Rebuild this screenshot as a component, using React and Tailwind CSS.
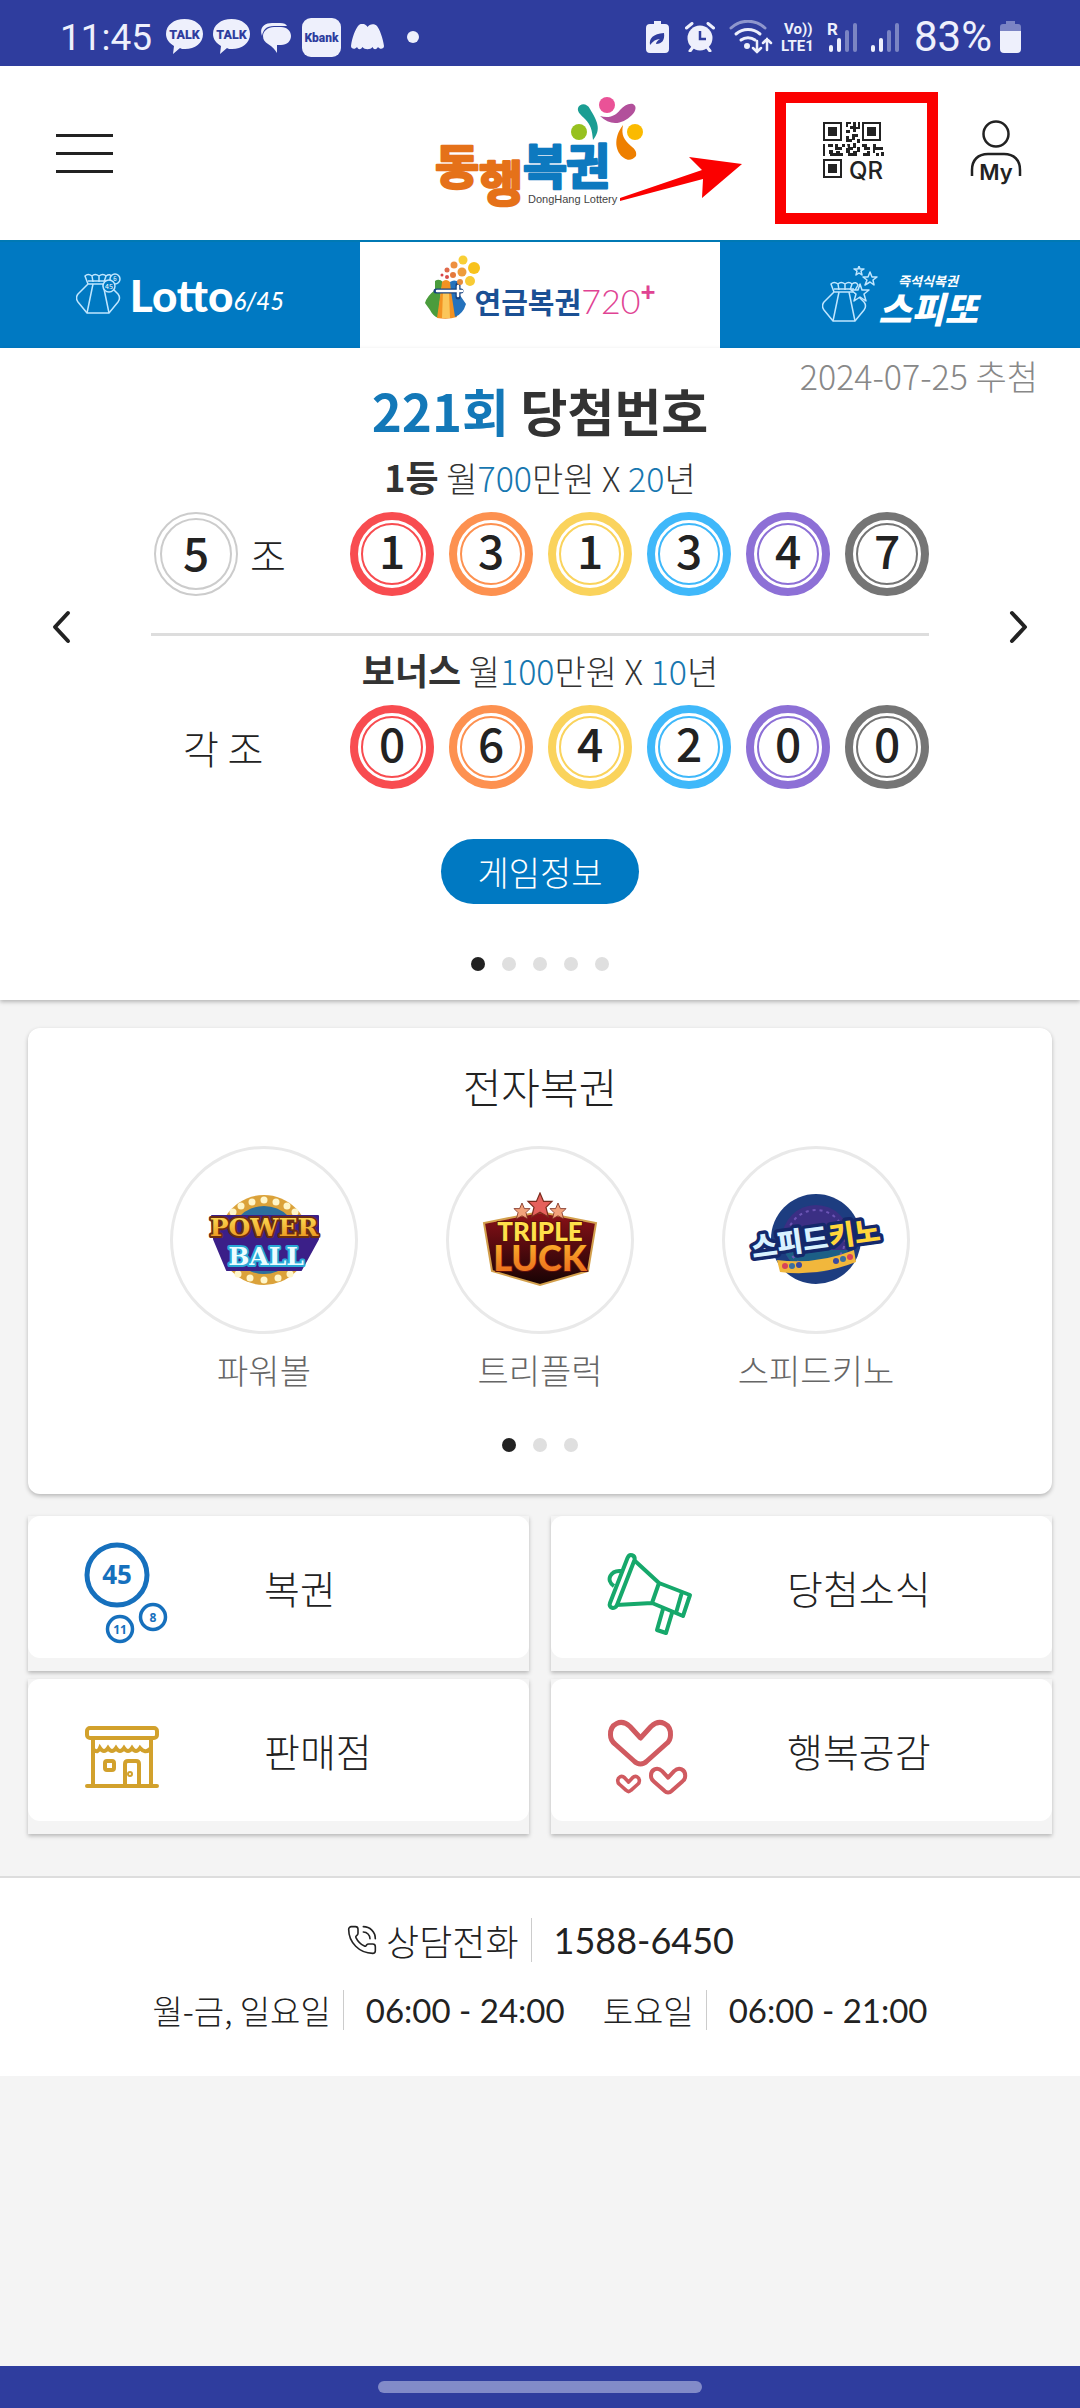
import { useState } from "react";
import { PhoneCall } from "lucide-react";

const firstPrize = ["1", "3", "1", "3", "4", "7"];
const bonusPrize = ["0", "6", "4", "2", "0", "0"];

const ballColors = [
  "border-[#f84c50] text-[#f84c50]",
  "border-[#fd9150] text-[#fd9150]",
  "border-[#fad35c] text-[#fad35c]",
  "border-[#3fb8fa] text-[#3fb8fa]",
  "border-[#8d70d6] text-[#8d70d6]",
  "border-[#757575] text-[#757575]",
];

function StatusBar() {
  return (
    <div className="flex h-[66px] items-center justify-between bg-[#2f3d9e] pt-2 pr-[59px] pl-[60px] font-['Roboto','Noto_Sans_CJK_KR',sans-serif] text-[#eef0fc]">
      <div className="flex items-center gap-[10px]">
        <span className="mr-1 text-[37px] leading-none">11:45</span>
        <TalkIcon />
        <TalkIcon />
        <svg width="32" height="32" viewBox="0 0 32 32" fill="currentColor">
          <path d="M2 15C-1 7 4 2 12 2h8c4 0 6 1 7 3H14C6 5 3 9 2 15z" />
          <path d="M14 6h7c6 0 10 4 10 9s-4 9-10 9h-4v8c-2-3-4-6-9-9-3-2-5-4-5-8 0-5 5-9 11-9z" />
        </svg>
        <svg width="39" height="39" viewBox="0 0 39 39">
          <rect width="39" height="39" rx="9" fill="currentColor" />
          <text x="19.5" y="24" textAnchor="middle" fontSize="12" fontWeight="900" fill="#2f3d9e">
            Kbank
          </text>
        </svg>
        <svg width="33" height="26" viewBox="0 0 33 26" fill="currentColor">
          <path d="M0 22C1 14 4 6 7 2s8-2 9.500 1c1.500-3 7-4 9.500-1s6 12 7 20c0 3-4 4-6 1-2 3-4 3-5.500 0-2 3-8 3-10 0-2 3-4 3-5.500 0-2 3-6 2-6-1z" />
        </svg>
        <svg className="ml-3" width="14" height="14" viewBox="0 0 14 14">
          <circle cx="7" cy="7" r="6" fill="currentColor" />
        </svg>
      </div>
      <div className="flex items-center gap-2">
        <svg width="31" height="32" viewBox="0 0 31 32">
          <path d="M8 0h7v3h4q4 0 4 4v21q0 4-4 4H4q-4 0-4-4V7q0-4 4-4h4z" fill="currentColor" />
          <path d="M4 24c-1-7 3-11 14-12 1 7-2 11-8 11 0-2 2-4 4-5-4 0-7 2-10 6z" fill="#2f3d9e" />
        </svg>
        <svg width="36" height="30" viewBox="0 0 36 30">
          <circle cx="15" cy="16" r="12.5" fill="currentColor" />
          <path d="M1.500 6L7 1.500M28.500 6L23 1.500M5 29l3-4M25 29l-3-4" stroke="currentColor" strokeWidth="3" strokeLinecap="round" />
          <path d="M15 9v8h6" stroke="#2f3d9e" strokeWidth="2.500" fill="none" />
        </svg>
        <svg width="44" height="34" viewBox="0 0 44 34" fill="none" stroke="currentColor" strokeWidth="3" strokeLinecap="round">
          <path d="M2 8C12-1 26-1 36 8" opacity="0.5" />
          <path d="M7 14c7-6 17-6 24 0M12 20c4-3 10-3 14 0" />
          <circle cx="18" cy="26" r="1.500" fill="currentColor" />
          <path d="M28 21v11m-4-4l4 4 4-4M38 30V19m-4 4l4-4 4 4" strokeWidth="2.500" />
        </svg>
        <svg width="38" height="36" viewBox="0 0 38 36" fill="currentColor" fontWeight="700">
          <text x="3" y="15" fontSize="15">Vo))</text>
          <text x="0" y="32" fontSize="15">LTE1</text>
        </svg>
        <svg width="36" height="34" viewBox="0 0 36 34" fill="currentColor">
          <text x="0" y="15" fontSize="17" fontWeight="700">R</text>
          <rect x="2" y="25" width="4" height="7" rx="2" />
          <rect x="10" y="18" width="4" height="14" rx="2" />
          <g opacity="0.4">
            <rect x="18" y="10" width="4" height="22" rx="2" />
            <rect x="26" y="3" width="4" height="29" rx="2" />
          </g>
        </svg>
        <svg width="35" height="34" viewBox="0 0 35 34" fill="currentColor">
          <rect x="0" y="25" width="4" height="7" rx="2" />
          <rect x="8" y="18" width="4" height="14" rx="2" />
          <g opacity="0.4">
            <rect x="16" y="10" width="4" height="22" rx="2" />
            <rect x="24" y="3" width="4" height="29" rx="2" />
          </g>
        </svg>
        <span className="text-[42px] leading-none">83%</span>
        <svg width="21" height="32" viewBox="0 0 21 32">
          <path d="M6 0h9v3h3q3 0 3 3v5H0V6q0-3 3-3h3z" fill="currentColor" opacity="0.4" />
          <path d="M0 10h21v18q0 4-4 4H4q-4 0-4-4z" fill="currentColor" />
        </svg>
      </div>
    </div>
  );
}

function TalkIcon() {
  return (
    <svg width="37" height="36" viewBox="0 0 37 36">
      <path d="M18.500 0C29 0 37 6 37 15s-8 15-18 15c-2 0-4 0-5-1l-7 6 1-8C3 24 0 20 0 15 0 6 8 0 18.500 0z" fill="currentColor" />
      <text x="18.500" y="20" textAnchor="middle" fontSize="12.500" fontWeight="900" fill="#2f3d9e">
        TALK
      </text>
    </svg>
  );
}

function Logo() {
  return (
    <svg width="216" height="124" viewBox="0 0 216 124" role="img" aria-label="동행복권">
      <g fontFamily="'Noto Sans CJK KR', sans-serif" fontWeight="700" fontSize="48" strokeWidth="2.500" strokeLinejoin="round">
        <text x="3" y="93" fill="#e57119" stroke="#e57119">동</text>
        <text x="47" y="110" fill="#e57119" stroke="#e57119">행</text>
        <text x="91" y="93" fill="#0d79bf" stroke="#0d79bf">복</text>
        <text x="134" y="93" fill="#0d79bf" stroke="#0d79bf">권</text>
      </g>
      <text x="96" y="112" fontFamily="'Liberation Sans', sans-serif" fontSize="11" fill="#444">
        DongHang Lottery
      </text>
      <circle cx="147" cy="41" r="8" fill="#97c11f" />
      <path d="M146 17c2-5 9-5 12 1 7 12 12 20 3 31-1-10-2-15-8-21-4-4-8-7-7-11z" fill="#1b9e93" />
      <circle cx="175" cy="14" r="8" fill="#ea5297" />
      <path d="M168 25c10 3 16-1 20-6 4-4 8-7 13-6 4 2 3 7-1 11-10 10-22 11-32 1z" fill="#b2509b" />
      <circle cx="203" cy="41" r="8" fill="#fbba00" />
      <path d="M191 34c-10 13-8 27 1 33 4 3 9 2 12-2 1-4-1-7-5-10-7-6-10-11-8-21z" fill="#ee7f00" />
    </svg>
  );
}

function QrIcon() {
  return (
    <svg width="62" height="62" viewBox="0 0 62 62" fill="#222">
      {[[0, 0], [39, 0], [0, 37]].map(([x, y]) => (
        <g key={`${x}-${y}`}>
          <rect x={x + 1} y={y + 1} width="17" height="17" fill="none" stroke="#222" strokeWidth="2" />
          <rect x={x + 5} y={y + 5} width="9" height="9" />
        </g>
      ))}
      <path d="M23 0h5v2h-3v3h-2zM30 0h3v5h2V0h2v7h-4v3h-3V7h-3V4h3zM23 8h4v3h-4zM29 12h6v3h-3v3h-3zM23 14h3v3h3v3h-6zM34 17h3v4h-3z" />
      <path d="M0 22h2v12H0zM5 22h5v3H5zM12 22h3v3h4v-3h3v3h-3v3h-7zM6 28h4v3h3v-2h4v2h3v3H7v-2H6zM24 22h3v3h3v-4h3v5h-3v3h4v-4h3v5h-3v4h-9v-3h-2v-5h2zM27 28v3h3v-3zM39 22h5v3h3v3h-6v-3h-2zM50 22h3v3h7v3h-8v3h4v3h-3v-3h-3zM40 31h4v-2h3v5h-7zM58 30h3v4h-3z" />
      <text x="26" y="57" fontFamily="Inter, 'Liberation Sans', sans-serif" fontSize="24" fontWeight="500">
        QR
      </text>
    </svg>
  );
}

function Header() {
  return (
    <header className="grid h-[174px] grid-cols-[1fr_auto_1fr] items-center bg-white px-14">
      <button aria-label="메뉴" className="flex w-[57px] flex-col gap-[15px]">
        <span className="h-[3px] bg-[#222]" />
        <span className="h-[3px] bg-[#222]" />
        <span className="h-[3px] bg-[#222]" />
      </button>
      <a href="#home">
        <Logo />
      </a>
      <div className="flex items-center justify-end gap-[85px] pr-0.5">
        <button aria-label="QR" className="relative">
          <QrIcon />
          <span className="absolute -top-[30px] -right-[53px] -bottom-[40px] -left-[48px] border-[11px] border-[#fb0000]" />
          <svg className="absolute top-8 -left-[204px]" width="124" height="50" viewBox="0 0 124 50">
            <path d="M1 44L83 16 70 3l53 7-40 34 1-19L1 47z" fill="#fb0000" />
          </svg>
        </button>
        <button aria-label="My">
          <svg width="52" height="66" viewBox="0 0 52 66" fill="none" stroke="#222" strokeWidth="2.500">
            <circle cx="26" cy="14" r="12.500" />
            <path d="M2 56V50C2 40 8 34 18 34h16c10 0 16 6 16 16v6" />
            <text x="26" y="60" textAnchor="middle" fontFamily="Inter, 'Liberation Sans', sans-serif" fontSize="22" fontWeight="600" fill="#222" stroke="none">
              My
            </text>
          </svg>
        </button>
      </div>
    </header>
  );
}

function BagOutline() {
  return (
    <g fill="none" stroke="#bfe6ff" strokeWidth="1.500" strokeLinejoin="round">
      <path d="M12 11L2 21q-3 4 0 8l9 11h22l9-11q3-4 0-8L32 11z" />
      <path d="M12 11L9 3q3-3 7 0 3-3 7 0 4-3 7 0 4-3 6 1l-4 7M17 11l-6 29M27 11l6 29M12 8h20M16 3l1 6M23 3v6M30 3l-2 6" />
    </g>
  );
}

function LottoTab() {
  return (
    <>
      <svg width="46" height="44" viewBox="0 0 46 44">
        <BagOutline />
        <circle cx="39" cy="6" r="5" fill="#0079c2" stroke="#bfe6ff" strokeWidth="1.500" />
        <circle cx="33" cy="13" r="6" fill="#0079c2" stroke="#bfe6ff" strokeWidth="1.500" />
        <text x="33" y="16" textAnchor="middle" fontSize="7" fill="#fff">45</text>
        <text x="39" y="8" textAnchor="middle" fontSize="6" fill="#fff">6</text>
      </svg>
      <span className="ml-2 font-['Lato'] text-[44px] leading-none font-black">Lotto</span>
      <span className="mt-3 font-['Lato'] text-[24px] leading-none font-medium italic">6/45</span>
    </>
  );
}

function PensionTab() {
  return (
    <>
      <svg className="mb-4 -mr-2" width="58" height="64" viewBox="0 0 58 64">
        <path d="M10 26q4-3 8 1l-2 9-3 27q-5-2-8-8L0 48q2-7 10-13z" fill="#4a9c3c" />
        <path d="M17 27q4-4 8 0l4 9 3 26q-9 3-20 1l4-28z" fill="#f39222" />
        <path d="M18 36h6l1 27h-8z" fill="#fbc65a" />
        <path d="M25 27q4-3 9 0l-2 9 9 13q-3 10-11 13l-4-26z" fill="#2572bc" />
        <path d="M11 36h25M33 30v12" stroke="#17427f" strokeWidth="5" strokeLinecap="round" />
        <path d="M12 36h25M33 31v10" stroke="#fff" strokeWidth="2.500" strokeLinecap="round" />
        <circle cx="38" cy="5" r="4.500" fill="#f8cf35" />
        <circle cx="49" cy="13" r="6" fill="#f8c21c" />
        <circle cx="45" cy="26" r="5" fill="#f8cb35" />
        <circle cx="37" cy="17" r="4.500" fill="#ee9c3b" />
        <circle cx="29" cy="10" r="3.500" fill="#ee9040" />
        <circle cx="28" cy="20" r="3" fill="#e57a3c" />
        <circle cx="35" cy="27" r="3" fill="#e58a3c" />
        <circle cx="22" cy="15" r="2.500" fill="#e0694a" />
        <circle cx="22" cy="22" r="2" fill="#d84d4a" />
        <circle cx="17" cy="20" r="1.500" fill="#d8434a" />
      </svg>
      <span className="mt-3 text-[29px] leading-none font-bold text-[#1b5094]">연금복권</span>
      <span className="mt-3 font-['Lato'] text-[34px] leading-none font-light text-[#e04393]">720</span>
      <span className="mb-2 font-['Lato'] text-[26px] leading-none font-black text-[#e04393]">+</span>
    </>
  );
}

function SpeettoTab() {
  return (
    <>
      <svg width="56" height="58" viewBox="0 0 56 58">
        <g transform="translate(0 15)">
          <BagOutline />
        </g>
        <g fill="#0079c2" stroke="#bfe6ff" strokeWidth="1.500" strokeLinejoin="round">
          <path d="M38 18l2 6 7 0-5 4 2 7-6-4-6 4 2-7-5-4 7 0z" />
          <path d="M48 6l2 5 5 0-4 3 1 5-4-3-5 3 2-5-4-3 5 0z" />
          <path d="M37 0l1 3 4 0-3 2 1 4-3-2-3 2 1-4-3-2 4 0z" />
        </g>
      </svg>
      <span className="flex flex-col items-center pt-2 font-bold italic">
        <span className="text-[13px] leading-4">즉석식복권</span>
        <span className="text-[36px] leading-9 font-black">스피또</span>
      </span>
    </>
  );
}

function Ball({ number, color }) {
  return (
    <span className={`flex size-[84px] items-center justify-center rounded-full border-8 bg-white ${color}`}>
      <span className="flex size-[62px] items-center justify-center rounded-full border-2 border-current">
        <span className="pb-2.5 text-[46px] leading-none font-medium text-[#222]">{number}</span>
      </span>
    </span>
  );
}

function Balls({ numbers }) {
  return (
    <div className="flex gap-[15px]">
      {numbers.map((n, i) => (
        <Ball key={i} number={n} color={ballColors[i]} />
      ))}
    </div>
  );
}

function PrizeTitle({ rank, amount, years }) {
  return (
    <h3 className="text-center text-[34px] leading-[38px] font-light text-[#333]">
      <strong className="text-[36px] font-bold">{rank}</strong> 월<span className="text-[#1777b0]">{amount}</span>만원 X{" "}
      <span className="text-[#1777b0]">{years}</span>년
    </h3>
  );
}

function Dots({ count, label }) {
  const [active, setActive] = useState(0);
  return (
    <div className="flex justify-center gap-[17px]">
      {Array.from({ length: count }, (_, i) => (
        <button
          key={i}
          aria-label={`${label} ${i + 1}`}
          onClick={() => setActive(i)}
          className={`size-[14px] rounded-full ${i === active ? "bg-[#222]" : "bg-[#dfdfdf]"}`}
        />
      ))}
    </div>
  );
}

function Star({ x, y, scale, fill }) {
  return (
    <path
      transform={`translate(${x} ${y}) scale(${scale})`}
      d="M0-10l3 7 7 0-5 5 2 8-7-4-7 4 2-8-5-5 7 0z"
      fill={fill}
      stroke="#7a2a1c"
      strokeWidth="1"
    />
  );
}

function PowerBallLogo() {
  return (
    <svg width="128" height="96" viewBox="0 0 128 96">
      <defs>
        <linearGradient id="gold" x1="0" y1="0" x2="0" y2="1">
          <stop offset="0" stopColor="#ffe65c" />
          <stop offset="1" stopColor="#e88a14" />
        </linearGradient>
      </defs>
      <circle cx="64" cy="48" r="45" fill="#dba23a" />
      <circle cx="64" cy="48" r="34" fill="#2c6f9d" />
      <g fill="#fff6c9">
        <circle cx="33" cy="20" r="3.500" /><circle cx="41" cy="14" r="3.500" />
        <circle cx="52" cy="10" r="3.500" /><circle cx="64" cy="8" r="3.500" />
        <circle cx="76" cy="10" r="3.500" /><circle cx="87" cy="14" r="3.500" />
        <circle cx="95" cy="20" r="3.500" /><circle cx="38" cy="82" r="3.500" />
        <circle cx="50" cy="86" r="3.500" /><circle cx="64" cy="88" r="3.500" />
        <circle cx="78" cy="86" r="3.500" /><circle cx="90" cy="82" r="3.500" />
      </g>
      <path d="M12 24h106v23l-17 31H27L14 47z" fill="#3b1f88" stroke="#3b1f88" strokeWidth="2" strokeLinejoin="round" />
      <g textAnchor="middle" fontFamily="'DejaVu Serif', serif" fontWeight="700" paintOrder="stroke" strokeLinejoin="round">
        <text x="64" y="44" fontSize="25" fill="url(#gold)" stroke="#6b2c12" strokeWidth="4">POWER</text>
        <text x="66" y="73" fontSize="25" fill="#ecfdff" stroke="#29a9d6" strokeWidth="4">BALL</text>
      </g>
    </svg>
  );
}

function TripleLuckLogo() {
  return (
    <svg width="128" height="96" viewBox="0 0 128 96">
      <defs>
        <linearGradient id="shield" x1="0" y1="0" x2="0" y2="1">
          <stop offset="0" stopColor="#8d1118" />
          <stop offset="1" stopColor="#160304" />
        </linearGradient>
        <linearGradient id="luck" x1="0" y1="0" x2="0" y2="1">
          <stop offset="0" stopColor="#ffc02e" />
          <stop offset="1" stopColor="#e8601a" />
        </linearGradient>
      </defs>
      <path d="M64 20l56 11-8 48-48 14-48-14L8 31z" fill="url(#shield)" stroke="#d3a04d" strokeWidth="2" />
      <Star x={46} y={19} scale={0.8} fill="#f2a27b" />
      <Star x={82} y={19} scale={0.8} fill="#f2a27b" />
      <Star x={64} y={13} scale={1.2} fill="#e5605c" />
      <g textAnchor="middle" fontFamily="Lato, sans-serif" fontWeight="900" paintOrder="stroke" strokeLinejoin="round">
        <text x="64" y="49" fontSize="26" fill="#ffe04a" stroke="#5a0f0c" strokeWidth="2">TRIPLE</text>
        <text x="64" y="79" fontSize="36" fill="url(#luck)" stroke="#5a0f0c" strokeWidth="2">LUCK</text>
      </g>
    </svg>
  );
}

function SpeedKenoLogo() {
  return (
    <svg width="140" height="96" viewBox="-4 0 140 96">
      <circle cx="66" cy="47" r="45" fill="#1d3d80" />
      <circle cx="66" cy="47" r="34" fill="#3b2f84" />
      <path d="M34 58h64a34 34 0 0 1-64 0z" fill="#1c5f86" />
      <circle cx="66" cy="47" r="29" fill="none" stroke="#6c55b5" strokeWidth="2" strokeDasharray="3 4" />
      <path d="M27 68q40 5 77-10l2 12q-38 15-76 10z" fill="#f1b73c" />
      <circle cx="35" cy="74" r="3" fill="#d8435a" />
      <circle cx="42" cy="74" r="3" fill="#3a6fa0" />
      <circle cx="49" cy="73" r="3" fill="#3a4aa0" />
      <circle cx="86" cy="69" r="3" fill="#3a4aa0" />
      <circle cx="93" cy="67" r="3" fill="#3a6fa0" />
      <circle cx="100" cy="65" r="3" fill="#d8435a" />
      <g
        transform="rotate(-8 66 48)"
        fontFamily="'Noto Sans CJK KR', sans-serif"
        fontWeight="900"
        fontSize="28"
        stroke="#14286b"
        strokeWidth="7"
        strokeLinejoin="round"
        paintOrder="stroke"
      >
        <text x="1" y="57" fill="#d9f2ff">스피드</text>
        <text x="79" y="57" fill="#ffd63b">키노</text>
      </g>
    </svg>
  );
}

const games = [
  { name: "파워볼", logo: <PowerBallLogo /> },
  { name: "트리플럭", logo: <TripleLuckLogo /> },
  { name: "스피드키노", logo: <SpeedKenoLogo /> },
];

const heart =
  "M33.500 46L23 34.500C14 26 3 32 3.500 43c0 4 2 7 4.500 9l19 17c4 4 9 4 13 0l19-17c3-2 4.500-5 4.500-9C64 32 53 26 44 34.500z";

const menus = [
  {
    name: "복권",
    icon: (
      <svg width="88" height="116" viewBox="0 0 88 116" fill="none" stroke="#1670bd">
        <circle cx="33" cy="46" r="30" strokeWidth="5" />
        <circle cx="69" cy="88" r="12.500" strokeWidth="3.500" />
        <circle cx="36" cy="100" r="12.500" strokeWidth="3.500" />
        <g fill="#1670bd" stroke="none" textAnchor="middle" fontFamily="'Open Sans', sans-serif" fontWeight="700">
          <text x="33" y="55" fontSize="26">45</text>
          <text x="69" y="93" fontSize="12">8</text>
          <text x="36" y="105" fontSize="12">11</text>
        </g>
      </svg>
    ),
  },
  {
    name: "당첨소식",
    icon: (
      <svg width="88" height="116" viewBox="0 0 88 116" fill="none" stroke="#16a86b" strokeWidth="4" strokeLinejoin="round">
        <path d="M20.500 29c2-5 8-3 7 2L10 76c-2 5-9 3-7-2z" />
        <path d="M27 31l25 23-7 20-36 2M52 54l31 12-7 21-31-13M75 63l-6 21M56 80l-6 21 9 3 6-20" />
        <path d="M14 42C4 41-2 51 7 57" />
      </svg>
    ),
  },
  {
    name: "판매점",
    icon: (
      <svg width="88" height="116" viewBox="0 0 88 116" fill="none" stroke="#d2a12c" strokeWidth="4" strokeLinecap="round">
        <rect x="3" y="36" width="70" height="10" rx="3" />
        <path d="M3 94h70M9 47v46M67 47v46M10 58q4 3 6-2 4 6 8 0 4 6 8 0 4 6 8 0 4 6 8 0 4 6 8 0 5 6 10 1" />
        <rect x="21" y="69" width="9" height="9" rx="2" />
        <path d="M41 93V72q0-3 3-3h8q3 0 3 3v21" />
        <circle cx="46" cy="82" r="1" />
      </svg>
    ),
  },
  {
    name: "행복공감",
    icon: (
      <svg width="88" height="116" viewBox="0 0 88 116" fill="none" stroke="#d05a60" strokeLinejoin="round">
        <path d={heart} strokeWidth="5" />
        <path d={heart} transform="translate(42 59.500) scale(0.57)" strokeWidth="7" />
        <path d={heart} transform="translate(9.500 73.500) scale(0.36)" strokeWidth="10" />
      </svg>
    ),
  },
];

export default function App() {
  const [tab, setTab] = useState(1);
  const tabs = [<LottoTab />, <PensionTab />, <SpeettoTab />];

  return (
    <div className="flex min-h-screen flex-col bg-[#f4f4f4] font-['Noto_Sans_CJK_KR',sans-serif]">
      <StatusBar />
      <Header />

      {/* Lottery type tabs */}
      <nav className="grid h-[108px] grid-cols-3 border-t-2 border-[#0079b4]">
        {tabs.map((content, i) => (
          <button
            key={i}
            onClick={() => setTab(i)}
            className={`flex items-center justify-center ${tab === i ? "bg-white" : "bg-[#0079c2] text-white"}`}
          >
            {content}
          </button>
        ))}
      </nav>

      {/* Winning numbers */}
      <section className="bg-white pb-[29px] shadow-[0_2px_4px_rgba(0,0,0,0.25)]">
        <div className="grid pt-2">
          <h2 className="col-start-1 row-start-1 mt-[18px] text-center text-[51px] leading-[72px] font-bold text-[#333]">
            <span className="text-[#1378b8]">221회</span> 당첨번호
          </h2>
          <p className="col-start-1 row-start-1 self-start justify-self-end pr-[42px] text-[34px] leading-10 font-light text-[#888]">
            2024-07-25 추첨
          </p>
        </div>
        <div className="mt-[11px] flex items-center justify-between px-[50px]">
          <button aria-label="이전">
            <svg width="24" height="36" viewBox="0 0 24 36" fill="none" stroke="#222" strokeWidth="4" strokeLinecap="round" strokeLinejoin="round">
              <path d="M18 4L5 18l13 14" />
            </svg>
          </button>
          <div className="w-[778px] pb-2">
            <PrizeTitle rank="1등" amount="700" years="20" />
            <div className="mt-[15px] flex items-center justify-between">
              <div className="flex items-center gap-3 pl-[3px] text-[39px] font-light text-[#222]">
                <span className="flex size-[84px] items-center justify-center rounded-full border-2 border-[#ccc]">
                  <span className="flex size-[72px] items-center justify-center rounded-full border-2 border-[#ccc] pb-1.5 text-[46px] leading-none font-medium">
                    5
                  </span>
                </span>
                조
              </div>
              <Balls numbers={firstPrize} />
            </div>
            <div className="mt-[37px] mb-[14px] h-[3px] bg-[#ddd]" />
            <PrizeTitle rank="보너스" amount="100" years="10" />
            <div className="mt-[15px] flex items-center justify-between">
              <span className="pl-8 text-[39px] leading-none font-light text-[#222]">각 조</span>
              <Balls numbers={bonusPrize} />
            </div>
          </div>
          <button aria-label="다음">
            <svg width="24" height="36" viewBox="0 0 24 36" fill="none" stroke="#222" strokeWidth="4" strokeLinecap="round" strokeLinejoin="round">
              <path d="M6 4l13 14L6 32" />
            </svg>
          </button>
        </div>
        <div className="mt-[42px] mb-[53px] flex justify-center">
          <button className="h-[65px] rounded-full bg-[#0079c2] px-9 text-[34px] leading-none font-light text-white">게임정보</button>
        </div>
        <Dots count={5} label="당첨번호" />
      </section>

      <main className="px-7 pt-7 pb-[42px]">
        {/* Electronic lottery */}
        <section className="rounded-xl bg-white pt-7 pb-[42px] shadow-[0_2px_4px_rgba(0,0,0,0.25)]">
          <h2 className="text-center text-[42px] leading-[60px] font-light text-[#222]">전자복권</h2>
          <div className="mt-[30px] mb-[46px] flex justify-center gap-[88px]">
            {games.map((game) => (
              <a key={game.name} href="#game" className="flex w-[188px] flex-col items-center gap-4 pb-0.5">
                <span className="flex size-[188px] items-center justify-center rounded-full border-3 border-[#e9e9e9]">
                  {game.logo}
                </span>
                <span className="text-[34px] leading-10 font-light text-[#666]">{game.name}</span>
              </a>
            ))}
          </div>
          <Dots count={3} label="전자복권" />
        </section>

        <div className="mt-[22px] grid grid-cols-2 gap-x-[22px] gap-y-2">
          {menus.map((menu) => (
            <a key={menu.name} href="#menu" className="bg-[#f4f4f4] pb-[13px] shadow-[0_2px_4px_rgba(0,0,0,0.25)]">
              <span className="flex items-center gap-[92px] rounded-xl bg-white py-[13px] pl-14 text-[39px] font-light text-[#222]">
                {menu.icon}
                {menu.name}
              </span>
            </a>
          ))}
        </div>
      </main>

      <footer className="flex flex-col items-center gap-[26px] border-t-2 border-[#ddd] bg-white pt-10 pb-11 font-light text-[#222]">
        <p className="flex items-center text-[36px] leading-[44px]">
          <PhoneCall className="mr-2" size={32} strokeWidth={1.2} />
          상담전화
          <span className="mr-[22px] ml-3 h-[44px] w-px bg-[#ccc]" />
          <a href="tel:1588-6450" className="font-['Lato'] font-normal">1588-6450</a>
        </p>
        <p className="flex items-center text-[33px] leading-[44px]">
          월-금, 일요일
          <span className="mr-[22px] ml-3 h-10 w-px bg-[#ccc]" />
          <span className="font-['Lato'] font-normal">06:00 - 24:00</span>
          <span className="ml-[38px]">토요일</span>
          <span className="mr-[22px] ml-3 h-10 w-px bg-[#ccc]" />
          <span className="font-['Lato'] font-normal">06:00 - 21:00</span>
        </p>
      </footer>

      <div className="mt-auto flex h-[42px] items-center justify-center bg-[#2f3d9e]">
        <span className="h-3 w-[324px] rounded-full bg-[#828bc8]" />
      </div>
    </div>
  );
}
